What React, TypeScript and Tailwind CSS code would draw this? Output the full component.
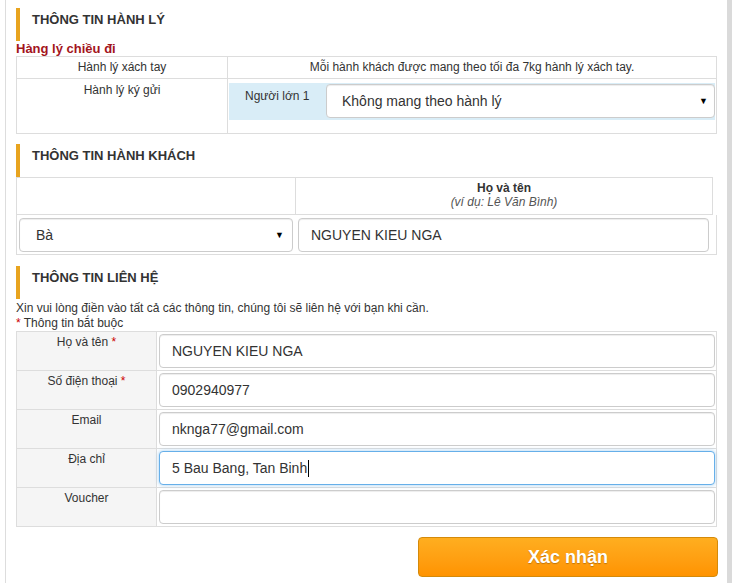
import React from 'react';

const SectionTitle = ({ title }: { title: string }) => (
  <div className="flex h-[33px]">
    <div className="w-[4px] bg-[#e8a41f]" />
    <div className="pl-[12px] pt-[4px] text-[13px] leading-[15px] font-bold text-[#333]">{title}</div>
  </div>
);

const FakeSelect = ({ value, className }: { value: string; className?: string }) => (
  <div
    className={`flex items-center justify-between h-[34px] bg-white border border-[#ccc] rounded-[4px] shadow-[inset_0_1px_1px_rgba(0,0,0,0.075)] text-[14px] text-[#333] ${className ?? ''}`}
  >
    <span>{value}</span>
    <span className="text-[9px] text-black pr-[6px]">▼</span>
  </div>
);

const Field = ({ value, focused }: { value: string; focused?: boolean }) => (
  <div
    className={`flex items-center h-[34px] bg-white rounded-[4px] pl-[12px] text-[14px] text-[#333] ${
      focused
        ? 'border border-[#66afe9] shadow-[0_0_4px_rgba(102,175,233,0.6)]'
        : 'border border-[#ccc] shadow-[inset_0_1px_1px_rgba(0,0,0,0.075)]'
    }`}
  >
    <span>{value}</span>
    {focused && <span className="w-px h-[17px] bg-black ml-px" />}
  </div>
);

const contacts = [
  { label: 'Họ và tên', required: true, value: 'NGUYEN KIEU NGA' },
  { label: 'Số điện thoại', required: true, value: '0902940977' },
  { label: 'Email', required: false, value: 'nknga77@gmail.com' },
  { label: 'Địa chỉ', required: false, value: '5 Bau Bang, Tan Binh', focused: true },
  { label: 'Voucher', required: false, value: '' },
];

export default function App() {
  return (
    <div
      className="flex w-full min-h-screen bg-white text-[#333]"
      style={{ fontFamily: '"Liberation Sans", Arial, sans-serif' }}
    >
      <div className="ml-[5px] flex-1 border-l border-[#ddd] px-[10px] pt-[8px] pb-[6px]">
        {/* Hành lý */}
        <SectionTitle title="THÔNG TIN HÀNH LÝ" />
        <div className="text-[13px] leading-[15px] font-bold text-[#a3141c]">Hàng lý chiều đi</div>
        <div className="border border-[#ddd] text-[12px] leading-[16px]">
          <div className="grid grid-cols-[211px_1fr] border-b border-[#ddd]">
            <div className="text-center pt-[2px] pb-[3px] border-r border-[#ddd]">Hành lý xách tay</div>
            <div className="text-center pt-[2px] pb-[3px]">
              Mỗi hành khách được mang theo tối đa 7kg hành lý xách tay.
            </div>
          </div>
          <div className="grid grid-cols-[211px_1fr] h-[54px]">
            <div className="text-center pt-[3px] border-r border-[#ddd]">Hành lý ký gửi</div>
            <div className="pt-[4px] pl-[1px] pr-[1px]">
              <div className="flex h-[37px] bg-[#d9edf7]">
                <div className="w-[97px] pl-[16px] pt-[5px]">Người lớn 1</div>
                <FakeSelect value="Không mang theo hành lý" className="flex-1 mt-px pl-[15px]" />
              </div>
            </div>
          </div>
        </div>

        {/* Hành khách */}
        <div className="mt-[10px]">
          <SectionTitle title="THÔNG TIN HÀNH KHÁCH" />
        </div>
        <div className="text-[12px] leading-[14px]">
          <div className="grid grid-cols-[279px_1fr] mr-[4px] border border-[#ddd] h-[38px]">
            <div className="border-r border-[#ddd]" />
            <div className="text-center pt-[3px]">
              <div className="font-bold">Họ và tên</div>
              <div className="italic text-[#555]">(ví dụ: Lê Văn Bình)</div>
            </div>
          </div>
          <div className="grid grid-cols-[279px_1fr] border-x border-b border-[#ddd] h-[40px]">
            <div className="pt-[3px] pl-[2px] pr-[3px]">
              <FakeSelect value="Bà" className="pl-[16px] pr-[2px]" />
            </div>
            <div className="pt-[3px] pl-[2px] pr-[7px]">
              <Field value="NGUYEN KIEU NGA" />
            </div>
          </div>
        </div>

        {/* Liên hệ */}
        <div className="mt-[11px]">
          <SectionTitle title="THÔNG TIN LIÊN HỆ" />
        </div>
        <div className="text-[12px] leading-[15px] pt-[2px]">
          <div>Xin vui lòng điền vào tất cả các thông tin, chúng tôi sẽ liên hệ với bạn khi cần.</div>
          <div>
            <span className="text-[#c00]">*</span> Thông tin bắt buộc
          </div>
        </div>
        <div className="border border-[#ddd] text-[12px] leading-[16px]">
          {contacts.map((c, i) => (
            <div
              key={c.label}
              className={`grid grid-cols-[140px_1fr] h-[38px] ${i > 0 ? 'border-t border-[#ddd] h-[39px]' : ''}`}
            >
              <div className="bg-[#f5f5f5] border-r border-[#ddd] text-center pt-[2px]">
                {c.label}
                {c.required && <span className="text-[#c00]"> *</span>}
              </div>
              <div className="pt-[2px] pl-[2px] pr-[1px]">
                <Field value={c.value} focused={c.focused} />
              </div>
            </div>
          ))}
        </div>

        <div className="flex justify-end mt-[10px] mr-[-1px]">
          <button className="w-[300px] h-[40px] rounded-[4px] border border-[#d48a0a] bg-gradient-to-b from-[#ffae1f] to-[#ff9300] text-white text-[18px] font-bold [text-shadow:0_1px_1px_rgba(0,0,0,0.25)]">
            Xác nhận
          </button>
        </div>
      </div>
      <div className="w-[5px] bg-[#dadada]" />
    </div>
  );
}
